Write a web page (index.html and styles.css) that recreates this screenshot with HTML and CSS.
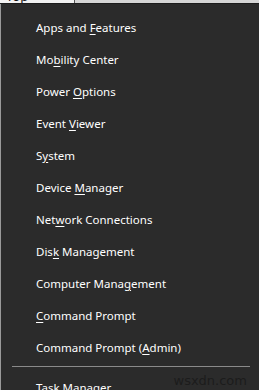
FILE: index.html
```html
<!DOCTYPE html>
<html lang="en">
<head>
  <meta charset="UTF-8">
  <title>Quick Link Menu</title>
  <link rel="stylesheet" href="styles.css">
</head>
<body>
  <div class="topbar">
    <div class="tab"><span>Top Marque</span></div>
    <div class="strip"></div>
  </div>

  <div class="menu">
    <div class="item">Apps and <u>F</u>eatures</div>
    <div class="item">Mo<u>b</u>ility Center</div>
    <div class="item">Power <u>O</u>ptions</div>
    <div class="item">Event <u>V</u>iewer</div>
    <div class="item">S<u>y</u>stem</div>
    <div class="item">Device <u>M</u>anager</div>
    <div class="item">Net<u>w</u>ork Connections</div>
    <div class="item">Dis<u>k</u> Management</div>
    <div class="item">Computer Mana<u>g</u>ement</div>
    <div class="item"><u>C</u>ommand Prompt</div>
    <div class="item">Command Prompt (<u>A</u>dmin)</div>
    <div class="sep"></div>
    <div class="item"><u>T</u>ask Manager</div>
  </div>

  <div class="watermark">wsxdn.com</div>
</body>
</html>
```
FILE: styles.css
```css
body {
  margin: 0;
  background-color: #2b2b2b;
  font-family: 'Noto Sans', 'Open Sans', sans-serif;
  height: 390px;
  overflow: hidden;
  position: relative;
}
.topbar {
  display: flex;
  height: 3px;
  overflow: hidden;
  border-bottom: 1px solid #1c1c1c;
}
.tab {
  width: 68px;
  padding-left: 6px;
  background-color: #f2f2f2;
  border-right: 1px solid #555;
  color: #111;
  font-size: 13px;
  line-height: 13px;
}
.tab span {
  display: block;
  margin-top: -10px;
}
.strip {
  flex: 1;
  background-color: #d6d6d6;
}
.menu {
  border-left: 1px solid #9a9a9a;
  height: 386px;
  padding-top: 8px;
  box-sizing: border-box;
}
.item {
  height: 32px;
  line-height: 32px;
  padding-left: 35px;
  color: #ffffff;
  font-size: 11.5px;
  white-space: nowrap;
}
.item u {
  text-underline-offset: 2px;
}
.sep {
  height: 1px;
  margin: 2px 9px 5px 11px;
  background-color: #8a8a8a;
}
.watermark {
  position: absolute;
  right: 12px;
  bottom: 2px;
  color: #1c1c1c;
  font-family: 'DejaVu Sans', sans-serif;
  font-size: 13px;
}
```
